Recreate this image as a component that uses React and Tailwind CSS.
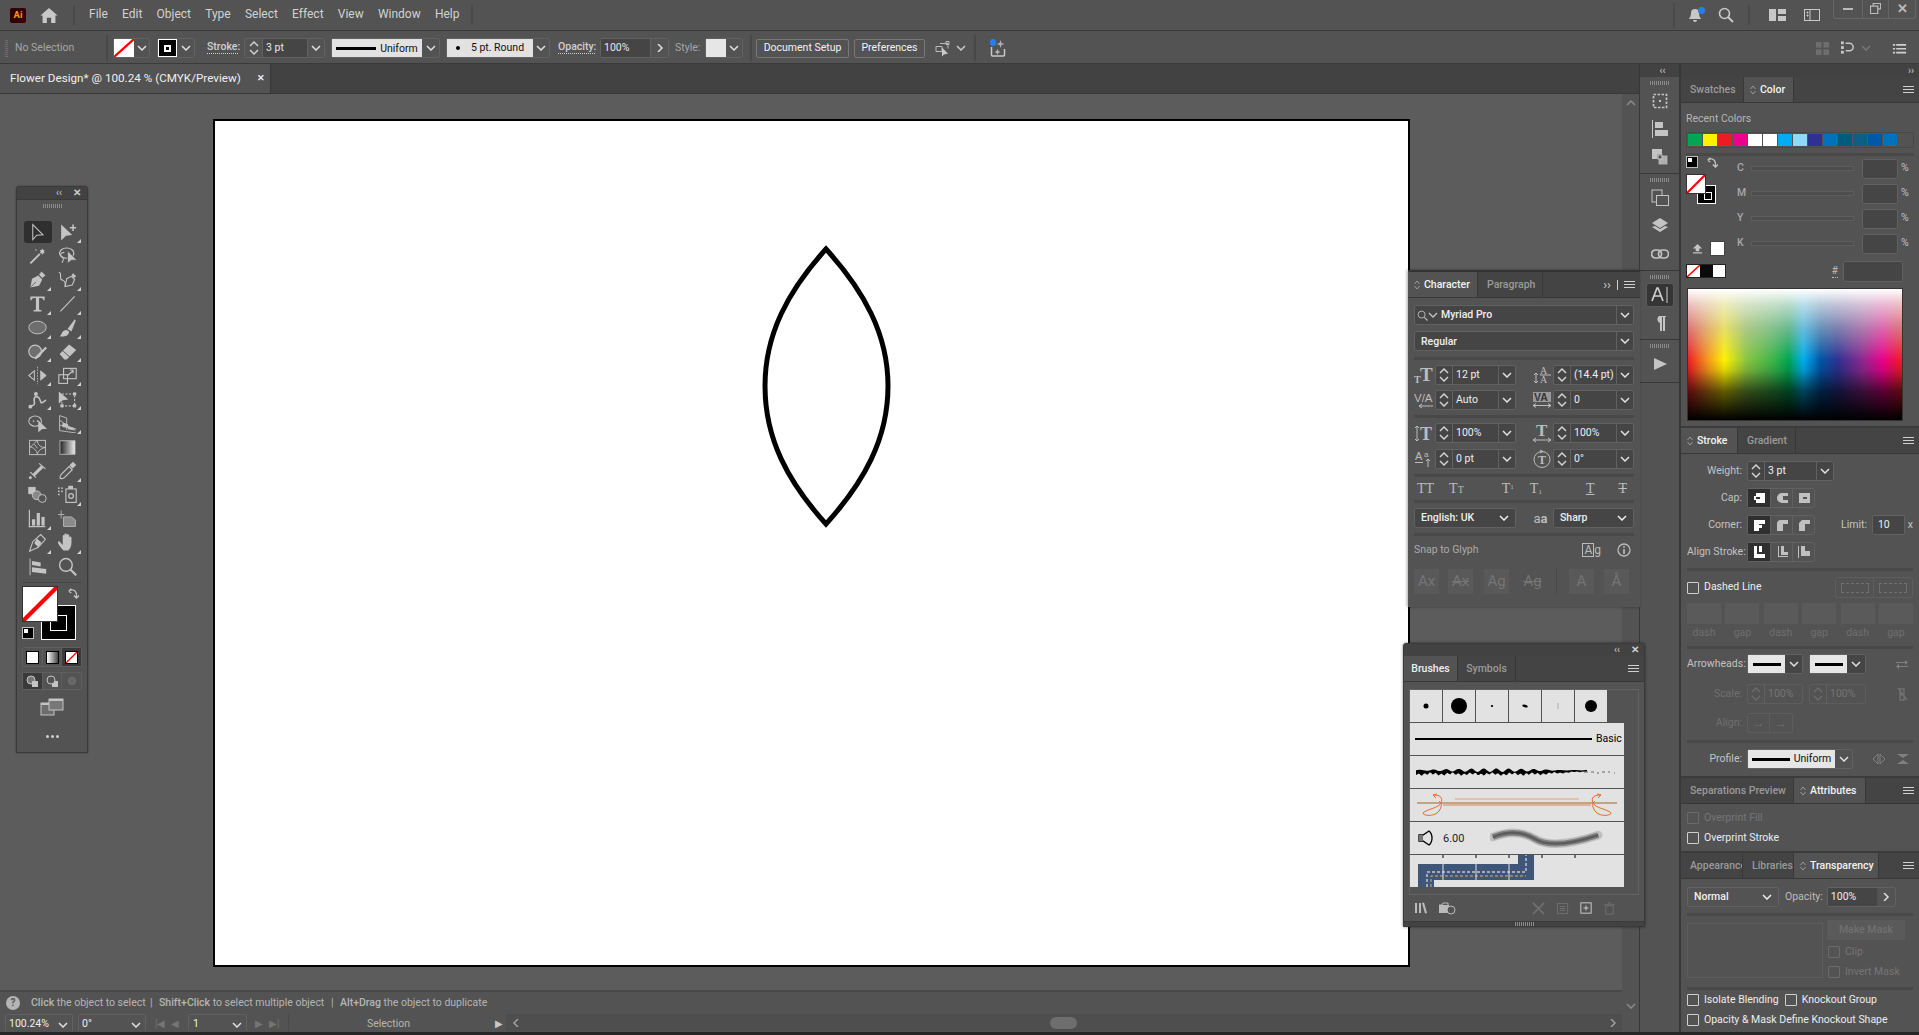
import React from "react";

const ink = "#c4c4c4";
const serif = "Liberation Serif, serif";
const sans = "Liberation Sans, sans-serif";

function Chev({ dir = "down", className = "" }) {
  const pts = {
    down: "1,1 5,5 9,1",
    up: "1,5 5,1 9,5",
    right: "3,0 7,4 3,8",
    left: "7,0 3,4 7,8",
  }[dir];
  const side = dir === "right" || dir === "left";
  return (
    <svg viewBox={side ? "0 0 10 8" : "0 0 10 6"} className={`w-[10px] ${side ? "h-[8px]" : "h-[6px]"} ${className}`}>
      <polyline points={pts} fill="none" stroke="currentColor" strokeWidth="1.5" />
    </svg>
  );
}

function Hamb({ className = "" }) {
  return (
    <div className={`flex w-[11px] flex-col gap-[2px] ${className}`}>
      <div className="h-px bg-[#cfcfcf]" />
      <div className="h-px bg-[#cfcfcf]" />
      <div className="h-px bg-[#cfcfcf]" />
    </div>
  );
}

function UpDown() {
  return (
    <svg viewBox="0 0 6 10" className="mr-[4px] h-[10px] w-[6px] shrink-0 text-[#9a9a9a]">
      <polyline points="0.5,4 3,1 5.5,4" fill="none" stroke="currentColor" />
      <polyline points="0.5,6 3,9 5.5,6" fill="none" stroke="currentColor" />
    </svg>
  );
}

function Stepper({ dim, w = "w-[17px]" }) {
  return (
    <div className={`flex h-full ${w} shrink-0 flex-col items-center justify-center gap-[2px] border-r border-[#616161] ${dim ? "text-[#6a6a6a]" : "text-[#d0d0d0]"}`}>
      <Chev dir="up" className="h-[5px] w-[9px]" />
      <Chev className="h-[5px] w-[9px]" />
    </div>
  );
}

function ChevBox({ w = "w-[17px]", dim }) {
  return (
    <div className={`flex h-full ${w} shrink-0 items-center justify-center border-l border-[#616161] ${dim ? "text-[#777]" : "text-[#e0e0e0]"}`}>
      <Chev className="h-[5px] w-[9px]" />
    </div>
  );
}

function Spin({ value, w, noChev, dim }) {
  return (
    <div className={`flex h-[20px] ${w} shrink-0 items-center rounded-[2px] border ${dim ? "border-[#5d5d5d] text-[#757575]" : "border-[#616161] bg-[#454545] text-[#efefef]"}`}>
      <Stepper dim={dim} />
      <span className="min-w-0 flex-1 whitespace-nowrap pl-[3px] pt-px leading-none">{value}</span>
      {!noChev && <ChevBox dim={dim} />}
    </div>
  );
}

function Tab({ label, active, w }) {
  return (
    <div className={`flex h-full ${w} shrink-0 items-center overflow-hidden border-r border-[#383838] font-medium ${active ? "bg-[#535353] pl-[6px] text-[#f2f2f2]" : "bg-[#444] pl-[9px] text-[#9a9a9a]"}`}>
      {active && <UpDown />}
      <span className="whitespace-nowrap pt-[2px]">{label}</span>
    </div>
  );
}

function TabBar({ children }) {
  return (
    <div className="flex h-[26px] shrink-0 items-stretch border-b border-[#383838] bg-[#444]">
      {children}
      <div className="flex flex-1 items-center justify-end pr-[5px]">
        <Hamb />
      </div>
    </div>
  );
}

function Check({ label, dim, className = "" }) {
  return (
    <div className={`flex h-[14px] items-center gap-[5px] whitespace-nowrap ${className}`}>
      <div className={`h-[12px] w-[12px] rounded-[1px] border ${dim ? "border-[#6a6a6a]" : "border-[#cfcfcf]"}`} />
      <span className={dim ? "text-[#757575]" : "text-[#ececec]"}>{label}</span>
    </div>
  );
}

function NoneSwatch({ className = "" }) {
  return (
    <svg viewBox="0 0 20 20" preserveAspectRatio="none" className={className}>
      <rect width="20" height="20" fill="#fff" />
      <line x1="0" y1="20" x2="20" y2="0" stroke="#ff0000" strokeWidth="2.4" />
    </svg>
  );
}

function Sep({ className = "" }) {
  return <div className={`h-[3px] bg-[#484848] ${className}`} />;
}

function Grip({ className = "" }) {
  return <div className={`h-[4px] w-[19px] bg-[repeating-linear-gradient(to_right,#8a8a8a_0,#8a8a8a_1px,transparent_1px,transparent_2px)] ${className}`} />;
}

// ---- tool icons, drawn on a 24 box

const toolIcons = [
  [
    <path d="M6 2v19l5-5.5 8-.5z" fill="none" stroke={ink} strokeWidth="1.3" />,
    <g fill={ink}>
      <path d="M4 2v20l6-6 8-1z" />
      <path d="M15 5h3V2h2v3h3v2h-3v3h-2V7h-3z" />
    </g>,
  ],
  [
    <g stroke={ink} fill={ink}>
      <line x1="3" y1="22" x2="15" y2="10" strokeWidth="2.4" />
      <path d="M18 3l1 2 2 0-1 2 1 2-2 0-1 2-1-2-2 0 1-2-1-2 2 0z" stroke="none" />
      <circle cx="10" cy="5" r="1" stroke="none" />
    </g>,
    <g>
      <ellipse cx="11" cy="9" rx="9" ry="6.5" fill="none" stroke={ink} strokeWidth="1.5" />
      <path d="M8 8c-5 0-6 4-3 6s2 4 0 7" fill="none" stroke={ink} strokeWidth="1.5" />
      <path d="M12 6v16l5-4 7 0z" fill={ink} stroke="#535353" />
    </g>,
  ],
  [
    <g fill={ink}>
      <path d="M3 22l2-11 8-4 5 5-4 8z" />
      <path d="M14 6l3-4 5 5-4 3z" />
      <line x1="3" y1="22" x2="10" y2="15" stroke="#535353" strokeWidth="1" />
    </g>,
    <g>
      <path d="M9 21l2-10 6-3 4 4-3 7z" fill="none" stroke={ink} strokeWidth="1.4" />
      <path d="M17 7l2-3 4 4-3 2z" fill={ink} />
      <path d="M1 3c4 0 1 7 3 9s6 0 5 9" fill="none" stroke={ink} strokeWidth="1.4" />
    </g>,
  ],
  [
    <path d="M3 3h18v5h-1.500c-.5-2-1-3-3-3H14v14c0 1 .8 1.500 3 1.500V22H7v-1.500c2.200 0 3-.5 3-1.500V5H7.500c-2 0-2.500 1-3 3H3z" fill={ink} />,
    <line x1="3" y1="22" x2="21" y2="3" stroke={ink} strokeWidth="1.4" />,
  ],
  [
    <ellipse cx="12" cy="12" rx="11" ry="8" fill="#6e6e6e" stroke={ink} strokeWidth="1.2" />,
    <g fill={ink}>
      <path d="M12 14L21 2l1.500 1L17 17z" />
      <path d="M2 23c3-1 2-8 9-8l3 2c0 6-7 7-12 6z" />
    </g>,
  ],
  [
    <g>
      <circle cx="9" cy="12" r="8" fill="#6e6e6e" stroke={ink} strokeWidth="1.5" />
      <path d="M8 20L22 6l2 2L10 22z" fill={ink} />
    </g>,
    <g>
      <path d="M2 15L14 3l9 7-12 12H8z" fill={ink} />
      <path d="M6 11l9 8" stroke="#535353" strokeWidth="1.2" />
    </g>,
  ],
  [
    <g stroke={ink} fill="none">
      <line x1="12" y1="1" x2="12" y2="23" strokeDasharray="2 1.5" />
      <path d="M8 6v12l-7-6z" strokeWidth="1.3" />
      <path d="M16 6v12l7-6z" fill={ink} />
    </g>,
    <g fill="none" stroke={ink} strokeWidth="1.4">
      <rect x="1" y="11" width="11" height="11" />
      <rect x="7" y="3" width="16" height="13" />
      <path d="M12 12l7-6M15 5h4v4" />
    </g>,
  ],
  [
    <g fill="none" stroke={ink} strokeWidth="2">
      <path d="M2 21c3-2 5-1 6-3s-2-7 1-9 5 1 6 3 1 5 3 4 4-3 5-3" />
      <circle cx="3" cy="21" r="1.500" />
      <circle cx="10" cy="5" r="1.500" fill={ink} />
    </g>,
    <g>
      <rect x="5" y="5" width="16" height="15" fill="none" stroke={ink} strokeDasharray="2.500 2" strokeWidth="1.4" />
      <path d="M1 2v15l5-4 7-1z" fill={ink} />
      <rect x="19" y="3" width="4" height="4" fill={ink} />
      <rect x="19" y="18" width="4" height="4" fill={ink} />
      <rect x="3" y="18" width="4" height="4" fill={ink} />
    </g>,
  ],
  [
    <g>
      <ellipse cx="9" cy="9" rx="8" ry="6.500" fill="none" stroke={ink} strokeWidth="1.3" />
      <circle cx="7" cy="9" r="1" fill={ink} />
      <circle cx="12" cy="9" r="1" fill={ink} />
      <path d="M13 8v15l5-4 6 0z" fill={ink} />
    </g>,
    <g fill="none" stroke={ink}>
      <path d="M2 2l0 19 21 3M2 2l9 3 0 15M2 8l20 13M2 14l21 5" strokeWidth="1.1" />
      <path d="M6 12l6 1v4l-6-1z" fill={ink} />
      <path d="M13 16l7 2v2l-7-1z" fill={ink} />
    </g>,
  ],
  [
    <g fill="none" stroke={ink} strokeWidth="1.2">
      <rect x="2" y="3" width="20" height="18" />
      <path d="M2 11c4 0 5-5 10-8M12 3c0 6 4 9 10 9M2 11c5 1 9 4 10 10M12 21c0-4 4-8 10-9M8 8l4 5" />
    </g>,
    <g>
      <defs>
        <linearGradient id="toolGrad">
          <stop offset="0" stopColor="#222" />
          <stop offset="1" stopColor="#eee" />
        </linearGradient>
      </defs>
      <rect x="2.500" y="3.500" width="19" height="17" fill="url(#toolGrad)" stroke={ink} />
    </g>,
  ],
  [
    <g fill={ink} stroke={ink}>
      <line x1="7" y1="18" x2="18" y2="7" strokeWidth="4" />
      <line x1="14" y1="3" x2="22" y2="10" strokeWidth="1.500" />
      <line x1="3" y1="14" x2="10" y2="21" strokeWidth="1.500" />
      <circle cx="3" cy="21" r="1.500" />
    </g>,
    <g fill="none" stroke={ink} strokeWidth="1.500">
      <path d="M3 22c-1-2 0-4 2-6l9-9 4 4-9 9c-2 2-4 3-6 2z" />
      <path d="M15 6l4-4 3 3-4 4" fill={ink} />
    </g>,
  ],
  [
    <g stroke={ink} strokeWidth="1.2">
      <rect x="1" y="3" width="8" height="8" fill={ink} />
      <circle cx="11" cy="13" r="5.500" fill="#888" />
      <circle cx="18" cy="17" r="5" fill="#535353" />
    </g>,
    <g fill={ink}>
      <rect x="13" y="1" width="6" height="4" />
      <rect x="10" y="5" width="13" height="17" fill="#535353" stroke={ink} strokeWidth="1.400" />
      <circle cx="16.500" cy="14" r="3" fill="none" stroke={ink} strokeWidth="1.500" />
      <rect x="0" y="3" width="2" height="2" />
      <rect x="4" y="3" width="2" height="2" />
      <rect x="0" y="7" width="2" height="2" />
      <rect x="4" y="7" width="2" height="2" />
      <rect x="0" y="11" width="2" height="2" />
    </g>,
  ],
  [
    <g fill={ink}>
      <rect x="1" y="1" width="1.500" height="22" />
      <rect x="1" y="21.500" width="21" height="1.500" />
      <rect x="5" y="13" width="4" height="8" />
      <rect x="11" y="5" width="4" height="16" />
      <rect x="17" y="10" width="4" height="11" />
    </g>,
    <g>
      <path d="M0 7h8M4 2v10" stroke={ink} />
      <path d="M7 10h10l5 4v8H7z" fill="#8a8a8a" stroke={ink} />
    </g>,
  ],
  [
    <g>
      <path d="M2 23l4-12 10-9 6 6-9 10z" fill="none" stroke={ink} strokeWidth="1.400" />
      <path d="M11 7l6 5-4 6-5-5z" fill={ink} />
    </g>,
    <path d="M7 22c-3-3-7-8-7-10s2-2 3 0l3 3V4c0-2 2-2 2 0v5V2c0-2 3-2 3 0v7-6c0-2 3-2 3 0v7-4c0-2 3-2 3 0 0 5 1 12-4 16z" fill={ink} />,
  ],
  [
    <g fill={ink}>
      <path d="M2 2h1.200v21H2z" />
      <path d="M5 5l11 2v5L5 10zM5 13l18 2v6L5 19z" />
    </g>,
    <g fill="none" stroke={ink}>
      <circle cx="10" cy="10" r="8" strokeWidth="1.800" />
      <line x1="16" y1="16" x2="23" y2="23" strokeWidth="2.600" />
    </g>,
  ],
];

const toolFlags = [
  [false, true],
  [false, false],
  [true, true],
  [true, true],
  [true, true],
  [true, true],
  [true, true],
  [true, true],
  [false, true],
  [false, false],
  [false, true],
  [false, true],
  [true, false],
  [true, true],
  [false, false],
];

function ToolPanel() {
  return (
    <div className="absolute left-[16px] top-[186px] flex h-[567px] w-[72px] flex-col rounded-t-[3px] border border-[#3a3a3a] bg-[#535353] shadow-[0_0_2px_rgba(0,0,0,0.4)]">
      <div className="flex h-[13px] shrink-0 items-center justify-end gap-[11px] border-b border-[#3a3a3a] bg-[#424242] pr-[6px] text-[#cfcfcf]">
        <span className="text-[10px] leading-none">‹‹</span>
        <span className="text-[10px] font-bold leading-none">✕</span>
      </div>
      <div className="mb-[13px] mt-[4px] flex h-[4px] justify-center">
        <Grip />
      </div>
      <div className="flex flex-col">
        {toolIcons.map((row, r) => (
          <div key={r} className="flex h-[23.9px] justify-center gap-[2px] pl-px">
            {row.map((icon, c) => (
              <div key={c} className={`relative flex h-[22px] w-[28px] items-center justify-center rounded-[3px] ${r === 0 && c === 0 ? "bg-[#2f2f2f]" : ""}`}>
                <svg viewBox="0 0 24 24" className="h-[19px] w-[19px]">{icon}</svg>
                {toolFlags[r][c] && (
                  <svg viewBox="0 0 4 4" className="absolute bottom-0 right-[1px] h-[4px] w-[4px]">
                    <path d="M4 0v4H0z" fill="#d0d0d0" />
                  </svg>
                )}
              </div>
            ))}
          </div>
        ))}
      </div>
      <div className="mx-[5px] mt-[3px] h-px bg-[#484848]" />
      <div className="relative mt-[3px] h-[53px]">
        <NoneSwatch className="absolute left-[5px] top-0 z-10 h-[36px] w-[36px] border border-[#333]" />
        <div className="absolute left-[24px] top-[19px] flex h-[35px] w-[35px] items-end justify-end border border-white bg-black p-[8px]">
          <div className="h-[16px] w-[18px] border border-white" />
        </div>
        <svg viewBox="0 0 14 14" className="absolute left-[50px] top-[1px] h-[12px] w-[12px]">
          <path d="M2 5c3-3 8-2 9 3M2 5l3-3M2 5l3 2M11 12V8M8 10l3 3 3-3" fill="none" stroke={ink} strokeWidth="1.5" />
        </svg>
        <div className="absolute left-[5px] top-[41px] h-[12px] w-[12px] border border-[#bbb] bg-black">
          <div className="h-[6px] w-[6px] border border-black bg-white" />
        </div>
      </div>
      <div className="mx-[5px] mt-[8px] flex h-[20px] rounded-[2px] border border-[#5f5f5f]">
        <div className="flex flex-1 items-center justify-center border-r border-[#5f5f5f]">
          <div className="h-[13px] w-[13px] border border-black bg-white" />
        </div>
        <div className="flex flex-1 items-center justify-center border-r border-[#5f5f5f]">
          <div className="h-[13px] w-[13px] border border-black bg-[linear-gradient(to_right,#fff,#444)]" />
        </div>
        <div className="flex flex-1 items-center justify-center bg-[#3a3a3a]">
          <NoneSwatch className="h-[13px] w-[13px] border border-black" />
        </div>
      </div>
      <div className="mx-[5px] mt-[5px] flex h-[18px] rounded-[2px] border border-[#5f5f5f]">
        <div className="flex flex-1 items-center justify-center bg-[#3a3a3a]">
          <svg viewBox="0 0 12 12" className="h-[12px] w-[12px]">
            <circle cx="5" cy="5" r="4" fill="#777" stroke={ink} />
            <rect x="6" y="6" width="6" height="6" fill={ink} />
          </svg>
        </div>
        <div className="flex flex-1 items-center justify-center border-x border-[#5f5f5f]">
          <svg viewBox="0 0 12 12" className="h-[12px] w-[12px]">
            <rect x="6" y="6" width="6" height="6" fill={ink} />
            <circle cx="5" cy="5" r="4" fill="#535353" stroke={ink} />
          </svg>
        </div>
        <div className="flex flex-1 items-center justify-center">
          <svg viewBox="0 0 12 12" className="h-[10px] w-[10px]">
            <circle cx="6" cy="6" r="4.5" fill="#666" stroke="#707070" />
          </svg>
        </div>
      </div>
      <div className="mt-[8px] flex justify-center">
        <svg viewBox="0 0 24 18" className="h-[18px] w-[24px]">
          <rect x="1" y="5" width="13" height="12" fill="#6d6d6d" stroke={ink} />
          <rect x="9" y="1" width="14" height="11" fill="#777" stroke={ink} />
          <rect x="9" y="1" width="14" height="2" fill={ink} />
          <rect x="1" y="5" width="8" height="2" fill={ink} />
        </svg>
      </div>
      <div className="mt-[19px] flex justify-center gap-[2px]">
        <div className="h-[3px] w-[3px] rounded-full bg-[#cfcfcf]" />
        <div className="h-[3px] w-[3px] rounded-full bg-[#cfcfcf]" />
        <div className="h-[3px] w-[3px] rounded-full bg-[#cfcfcf]" />
      </div>
    </div>
  );
}

const glyphFill = "#bcbcbc";
const charIcons = {
  size: (
    <>
      <text x="0" y="18" fontFamily={serif} fontWeight="700" fontSize="10" fill={glyphFill}>T</text>
      <text x="6" y="16" fontFamily={serif} fontWeight="700" fontSize="19" fill={glyphFill}>T</text>
    </>
  ),
  leading: (
    <>
      <text x="8" y="8.500" fontFamily={serif} fontSize="10" fill={glyphFill}>A</text>
      <text x="8" y="18" fontFamily={serif} fontSize="10" fill={glyphFill}>A</text>
      <rect x="8" y="9.500" width="11" height="1" fill={glyphFill} />
      <path d="M4 8v10M2 10l2-2 2 2M2 16l2 2 2-2" fill="none" stroke={glyphFill} />
    </>
  ),
  kern: (
    <>
      <text x="0" y="12" fontFamily={sans} fontSize="11.500" fill={glyphFill}>V/A</text>
      <path d="M5 16h14M8 14l-3 2 3 2" fill="none" stroke={glyphFill} />
    </>
  ),
  track: (
    <>
      <rect x="1" y="2" width="18" height="10" fill="#999" />
      <text x="2" y="11" fontFamily={sans} fontWeight="700" fontSize="10.500" fill="#353535">VA</text>
      <path d="M1 15.500h18M4 13.500l-3 2 3 2M16 13.500l3 2-3 2" fill="none" stroke={glyphFill} />
    </>
  ),
  vscale: (
    <>
      <path d="M3 3v15M1 5l2-2 2 2M1 16l2 2 2-2" fill="none" stroke={glyphFill} />
      <text x="6" y="17" fontFamily={serif} fontWeight="700" fontSize="18" fill={glyphFill}>T</text>
    </>
  ),
  hscale: (
    <>
      <text x="4" y="13" fontFamily={serif} fontWeight="700" fontSize="17" fill={glyphFill}>T</text>
      <path d="M1 17h18M4 15l-3 2 3 2M16 15l3 2-3 2" fill="none" stroke={glyphFill} />
    </>
  ),
  baseline: (
    <>
      <text x="1" y="11" fontFamily={sans} fontSize="11" fill={glyphFill}>A</text>
      <text x="10" y="7.500" fontFamily={sans} fontSize="8" fill={glyphFill}>a</text>
      <rect x="1" y="13" width="8" height="1" fill={glyphFill} />
      <path d="M14 18V10M12 12l2-2 2 2" fill="none" stroke={glyphFill} />
    </>
  ),
  rotate: (
    <>
      <circle cx="10" cy="10.500" r="8" fill="none" stroke={glyphFill} />
      <path d="M8 1l3 1.500L8 4" fill="none" stroke={glyphFill} />
      <text x="6" y="15" fontFamily={serif} fontWeight="700" fontSize="12" fill={glyphFill}>T</text>
    </>
  ),
};

function CharRow({ icon, value }) {
  return (
    <div className="flex w-[102px] items-center">
      <svg viewBox="0 0 20 20" className="mr-[1px] h-[20px] w-[20px] shrink-0">{charIcons[icon]}</svg>
      <Spin value={value} w="w-[81px]" />
    </div>
  );
}

function CharacterPanel() {
  return (
    <div className="absolute left-[1408px] top-[270px] flex h-[337px] w-[232px] flex-col border-t-2 border-[#333] bg-[#535353] shadow-[-1px_0_3px_rgba(0,0,0,0.35)]">
      <div className="flex h-[26px] shrink-0 items-stretch border-b border-[#383838] bg-[#444]">
        <Tab label="Character" active w="w-[70px]" />
        <Tab label="Paragraph" w="w-[65px]" />
        <div className="flex flex-1 items-center justify-end gap-[6px] pr-[5px] text-[#cfcfcf]">
          <span className="text-[13px] leading-none">››</span>
          <div className="h-[10px] w-px bg-[#cfcfcf]" />
          <Hamb />
        </div>
      </div>
      <div className="flex flex-col px-[6px] pt-[7px]">
        <div className="flex h-[20px] items-center rounded-[2px] border border-[#616161] bg-[#454545]">
          <div className="flex w-[26px] items-center pl-[2px] text-[#bbb]">
            <svg viewBox="0 0 12 12" className="h-[11px] w-[11px]">
              <circle cx="5" cy="5" r="3.800" fill="none" stroke="currentColor" />
              <line x1="8" y1="8" x2="11.500" y2="11.500" stroke="currentColor" strokeWidth="1.300" />
            </svg>
            <Chev className="h-[4px] w-[7px]" />
          </div>
          <span className="flex-1 pt-px font-medium text-[#efefef]">Myriad Pro</span>
          <ChevBox />
        </div>
        <div className="mt-[6px] flex h-[20px] items-center rounded-[2px] border border-[#616161] bg-[#454545]">
          <span className="flex-1 pl-[6px] pt-[2px] font-medium text-[#efefef]">Regular</span>
          <ChevBox />
        </div>
        <Sep className="mt-[6px]" />
        <div className="mt-[5px] flex justify-between">
          <CharRow icon="size" value="12 pt" />
          <CharRow icon="leading" value="(14.4 pt)" />
        </div>
        <div className="mt-[5px] flex justify-between">
          <CharRow icon="kern" value="Auto" />
          <CharRow icon="track" value="0" />
        </div>
        <Sep className="mt-[5px]" />
        <div className="mt-[5px] flex justify-between">
          <CharRow icon="vscale" value="100%" />
          <CharRow icon="hscale" value="100%" />
        </div>
        <div className="mt-[6px] flex justify-between">
          <CharRow icon="baseline" value="0 pt" />
          <CharRow icon="rotate" value="0°" />
        </div>
        <Sep className="mt-[5px]" />
        <div className="flex h-[23px] items-center pl-[3px] font-['Liberation_Serif',serif] text-[14px] leading-none text-[#bcbcbc]">
          <span>TT</span>
          <span className="ml-[15px]">T<span className="text-[10px]">T</span></span>
          <span className="ml-[38px]">T<sup className="text-[7px]">1</sup></span>
          <span className="ml-[16px]">T<sub className="text-[7px]">1</sub></span>
          <span className="ml-[44px] underline">T</span>
          <span className="ml-[24px] line-through">T</span>
        </div>
        <Sep />
        <div className="mt-[5px] flex justify-between">
          <div className="flex h-[20px] w-[102px] items-center justify-between rounded-[2px] border border-[#616161] bg-[#454545] px-[6px] font-medium text-[#efefef]">
            <span className="pt-px">English: UK</span>
            <Chev className="h-[5px] w-[9px]" />
          </div>
          <div className="flex items-center">
            <span className="w-[25px] text-center text-[13px] text-[#bbb]">a<span className="font-bold">a</span></span>
            <div className="flex h-[20px] w-[81px] items-center justify-between rounded-[2px] border border-[#616161] bg-[#454545] px-[6px] font-medium text-[#efefef]">
              <span className="pt-px">Sharp</span>
              <Chev className="h-[5px] w-[9px]" />
            </div>
          </div>
        </div>
        <Sep className="mt-[5px]" />
        <div className="mt-[4px] flex h-[20px] items-center">
          <span className="flex-1 text-[#a9a9a9]">Snap to Glyph</span>
          <span className="mr-[16px] flex items-center text-[12px] leading-none text-[#bbb]"><span className="border border-[#bbb] px-[1px]">A</span>g</span>
          <svg viewBox="0 0 14 14" className="mr-[3px] h-[14px] w-[14px] text-[#bbb]">
            <circle cx="7" cy="7" r="6" fill="none" stroke="currentColor" strokeWidth="1.300" />
            <rect x="6.200" y="6" width="1.600" height="5" fill="currentColor" />
            <rect x="6.200" y="3" width="1.600" height="1.800" fill="currentColor" />
          </svg>
        </div>
        <div className="mt-[9px] flex h-[25px] items-center text-[15px] text-[#757575]">
          <div className="flex h-full w-[25px] items-center justify-center bg-[#595959]">Ax</div>
          <div className="ml-[9px] flex h-full w-[25px] items-center justify-center bg-[#595959] line-through">Ax</div>
          <div className="ml-[11px] flex h-full w-[25px] items-center justify-center bg-[#595959]">Ag</div>
          <div className="ml-[11px] flex h-full w-[25px] items-center justify-center line-through">Ag</div>
          <div className="ml-[11px] h-full w-px bg-[#484848]" />
          <div className="ml-[12px] flex h-full w-[25px] items-center justify-center bg-[#595959]">A</div>
          <div className="ml-[10px] flex h-full w-[25px] items-center justify-center bg-[#595959]">Å</div>
        </div>
      </div>
    </div>
  );
}

// jagged chalk line for the brush preview
function roughLine() {
  let top = "M0 6";
  let bottom = "";
  for (let x = 0; x <= 172; x += 1.5) {
    const fade = x > 120 ? 1 - (x - 120) / 60 : 1;
    const a = (Math.sin(x * 3.7) + Math.sin(x * 0.53) * 0.6) * 1.1;
    const b = (Math.cos(x * 5.3) + Math.sin(x * 0.31) * 0.6) * 1.1;
    top += `L${x} ${(4.2 + a * fade).toFixed(1)}`;
    bottom = `L${x} ${(8 + b * fade - (1 - fade) * 3).toFixed(1)}` + bottom;
  }
  return top + bottom + "Z";
}

function BrushesPanel() {
  const dots = [
    <circle cx="16" cy="16" r="2.500" />,
    <circle cx="16" cy="16" r="8" />,
    <ellipse cx="16" cy="16" rx="1.200" ry="1" />,
    <ellipse cx="16" cy="16" rx="2.800" ry="1.400" transform="rotate(15 16 16)" />,
    <line x1="16" y1="13" x2="16" y2="19" stroke="#999" strokeWidth="0.700" />,
    <circle cx="16" cy="16" r="6" />,
  ];
  return (
    <div className="absolute left-[1403px] top-[643px] flex h-[284px] w-[242px] flex-col rounded-t-[3px] border border-[#3a3a3a] bg-[#535353] shadow-[0_0_3px_rgba(0,0,0,0.5)]">
      <div className="flex h-[12px] shrink-0 items-center justify-end gap-[11px] bg-[#424242] pr-[5px] text-[#cfcfcf]">
        <span className="text-[10px] leading-none">‹‹</span>
        <span className="text-[10px] font-bold leading-none">✕</span>
      </div>
      <TabBar>
        <div className="flex w-[54px] items-center justify-center border-r border-[#383838] bg-[#535353] pt-[2px] font-medium text-[#efefef]">Brushes</div>
        <div className="flex w-[58px] items-center justify-center border-r border-[#383838] pt-[2px] font-medium text-[#9a9a9a]">Symbols</div>
      </TabBar>
      <div className="mx-[5px] mt-[7px] h-[209px] border border-[#616161]">
        <div className="flex w-[214px] flex-col gap-px">
          <div className="flex h-[32px] gap-px">
            {dots.map((d, i) => (
              <svg key={i} viewBox="0 0 32 32" className="h-[32px] w-[32px] bg-[#e2e2e2]">{d}</svg>
            ))}
          </div>
          <div className="flex h-[32px] items-center bg-[#e2e2e2] pl-[5px] text-[#000]">
            <div className="h-[2px] w-[177px] bg-black" />
            <span className="ml-[4px]">Basic</span>
          </div>
          <div className="flex h-[32px] items-center justify-center bg-[#e2e2e2]">
            <svg viewBox="0 0 202 12" className="h-[12px] w-[202px]">
              <path d={roughLine()} fill="#000" />
              <path d="M168 6h4m3 0h3m3 1h2m3-1h3m3 0h2m4 1h1" stroke="#666" fill="none" />
            </svg>
          </div>
          <div className="flex h-[32px] items-center justify-center bg-[#e2e2e2]">
            <svg viewBox="0 0 204 24" className="h-[24px] w-[204px]">
              <line x1="2" y1="10" x2="202" y2="10" stroke="#a0662a" />
              <line x1="28" y1="12" x2="176" y2="12" stroke="#e8813a" />
              <line x1="40" y1="6" x2="164" y2="6" stroke="#e8a076" />
              <path d="M18 2c8 0 10 3 8 8s-14 6-18 10c0 3 12 4 16-2s2-8 0-10M18 2l4-1M18 2l3 3" fill="none" stroke="#e8682a" />
              <path d="M186 2c-8 0-10 3-8 8s14 6 18 10c0 3-12 4-16-2s-2-8 0-10M186 2l-4-1M186 2l-3 3" fill="none" stroke="#e8682a" />
            </svg>
          </div>
          <div className="flex h-[32px] items-center bg-[#e2e2e2] pl-[8px] text-[#222]">
            <svg viewBox="0 0 18 18" className="h-[18px] w-[18px]">
              <path d="M1 6h4l6-4c4 3 4 11 0 14l-6-4H1z" fill="none" stroke="#000" strokeWidth="1.300" />
              <rect x="1" y="6" width="4" height="6" fill="#777" />
            </svg>
            <span className="ml-[7px] text-[11px]">6.00</span>
            <svg viewBox="0 0 118 22" className="ml-[26px] h-[22px] w-[113px]">
              <path d="M3 10c20-8 34-4 44 2s30 8 66-4" fill="none" stroke="#b0b0b0" strokeWidth="9" strokeLinecap="round" opacity="0.7" />
              <path d="M3 10c20-8 34-4 44 2s30 8 66-4" fill="none" stroke="#808080" strokeWidth="6" />
              <path d="M3 10c20-8 34-4 44 2s30 8 66-4" fill="none" stroke="#5c5c5c" strokeWidth="2.500" />
            </svg>
          </div>
          <div className="relative h-[32px] overflow-hidden bg-[#e2e2e2]">
            <svg viewBox="0 0 214 32" className="h-[32px] w-[214px]">
              <g stroke="#000" strokeWidth="1">
                <line x1="33" y1="0" x2="33" y2="3" /><line x1="66" y1="0" x2="66" y2="3" /><line x1="99" y1="0" x2="99" y2="3" />
                <line x1="132" y1="0" x2="132" y2="3" /><line x1="165" y1="0" x2="165" y2="3" />
              </g>
              <path d="M8 32V9h100V0h16v25H24v7z" fill="#3f5678" />
              <path d="M17 32V17h99V0" fill="none" stroke="#fff" strokeWidth="1" strokeDasharray="3 2" />
              <path d="M21 32V21h95" fill="none" stroke="#e5b24e" strokeWidth="1" strokeDasharray="3 2" />
              <line x1="33" y1="9" x2="33" y2="25" stroke="#e2e2e2" />
              <line x1="66" y1="9" x2="66" y2="25" stroke="#e2e2e2" />
              <line x1="99" y1="9" x2="99" y2="25" stroke="#e2e2e2" />
            </svg>
          </div>
        </div>
      </div>
      <div className="flex h-[26px] items-center pl-[10px] pr-[28px] text-[#bbb]">
        <svg viewBox="0 0 16 12" className="h-[12px] w-[16px]"><path d="M1 1h2v10H1zM5 1h2v10H5zM8 1l2-.5 3 10.500-2 .5z" fill="currentColor" /></svg>
        <svg viewBox="0 0 18 14" className="ml-[8px] h-[14px] w-[18px]">
          <path d="M1 4h3l1-2h5v4" fill="none" stroke="currentColor" />
          <rect x="1" y="4" width="10" height="8" fill="currentColor" />
          <circle cx="13" cy="9" r="4" fill="#535353" stroke="currentColor" />
        </svg>
        <div className="flex-1" />
        <div className="flex items-center gap-[11px]">
          <svg viewBox="0 0 14 14" className="h-[13px] w-[13px] text-[#707070]"><path d="M1 1l12 12M13 1L1 13" stroke="currentColor" strokeWidth="1.800" /></svg>
          <svg viewBox="0 0 14 14" className="h-[13px] w-[13px] text-[#707070]"><rect x="1.500" y="1.500" width="11" height="11" fill="none" stroke="currentColor" /><path d="M4 5h6M4 7h6M4 9h6" stroke="currentColor" /></svg>
          <svg viewBox="0 0 14 14" className="h-[12px] w-[12px] text-[#ddd]"><rect x="1" y="1" width="12" height="12" fill="none" stroke="currentColor" /><path d="M7 4v6M4 7h6" stroke="currentColor" /></svg>
          <svg viewBox="0 0 14 14" className="h-[13px] w-[13px] text-[#707070]"><path d="M3 4h8v9H3zM1 3h12M5 1h4" fill="none" stroke="currentColor" /></svg>
        </div>
      </div>
      <div className="flex h-[5px] justify-center border-t border-[#3a3a3a] bg-[#424242]">
        <Grip className="h-[3px]" />
      </div>
    </div>
  );
}

function ToggleGroup({ icons, active = 0 }) {
  return (
    <div className="flex h-[20px] rounded-[2px] border border-[#616161]">
      {icons.map((d, i) => (
        <div key={i} className={`flex h-full w-[22px] items-center justify-center ${i > 0 ? "border-l border-[#616161]" : ""} ${i === active ? "bg-[#2f2f2f]" : ""}`}>
          <svg viewBox="0 0 12 12" className="h-[12px] w-[12px]">
            <g fill={i === active ? "#fff" : "#c0c0c0"}>{d}</g>
          </svg>
        </div>
      ))}
    </div>
  );
}

const capIcons = [
  <path d="M3 1h9v10H3V8H1V4h2zM3 5v2h4V5z" fillRule="evenodd" />,
  <path d="M6 1h6v3H7v4h5v3H6a5 5 0 010-10z" />,
  <path d="M1 1h11v10H1zM5 5v2h4V5z" fillRule="evenodd" />,
];
const cornerIcons = [
  <path d="M1 1h11v4H6v7H1zM6 6v3h3V6z" fillRule="evenodd" />,
  <path d="M5 1h7v4H7v7H1V5a4 4 0 014-4z" />,
  <path d="M4 1h8v4H7v7H1V4z" />,
];
const alignIcons = [
  <path d="M1 0h3v8h8v4H1zM6 0h3v6H6z" />,
  <path d="M2 0h1v10h9v1H2zM5 0h3v6h4v3H5z" />,
  <path d="M0 0h1v12H0zM3 0h4v5h5v5H3z" />,
];

function StrokeLine({ w }) {
  return <div className={`h-[3px] ${w} bg-black`} />;
}

function PanelLabel({ children, dim }) {
  return <span className={`w-[55px] shrink-0 whitespace-nowrap pt-px text-right ${dim ? "text-[#6f6f6f]" : "text-[#c2c2c2]"}`}>{children}</span>;
}

function ColorPanel() {
  const swatches = ["#00a651", "#fff200", "#ed1c24", "#ec008c", "#fff", "#fff", "#00aeef", "#8ed8f8", "#2e3192", "#0072bc", "#005b7f", "#0f5f85", "#0058a8", "#0072bc"];
  const cmyk = ["C", "M", "Y", "K"];
  return (
    <div className="flex h-[351px] shrink-0 flex-col border-b-2 border-[#3b3b3b]">
      <TabBar>
        <Tab label="Swatches" w="w-[63px]" />
        <Tab label="Color" active w="w-[50px]" />
      </TabBar>
      <div className="flex flex-col px-[5px] pt-[11px]">
        <span className="text-[#b5b5b5]">Recent Colors</span>
        <div className="mt-[7px] flex h-[16px] w-[228px] gap-px border border-[#484848] p-px">
          {swatches.map((c, i) => (
            <div key={i} className="h-full w-[14px]" style={{ background: c }} />
          ))}
        </div>
        <Sep className="mt-[5px] h-[2px]" />
        <div className="flex h-[108px]">
          <div className="relative h-[108px] w-[46px] shrink-0">
            <div className="absolute left-0 top-0 h-[12px] w-[12px] border border-[#bbb] bg-black">
              <div className="h-[6px] w-[6px] border border-black bg-white" />
            </div>
            <svg viewBox="0 0 14 14" className="absolute left-[20px] top-0 h-[12px] w-[12px]">
              <path d="M2 5c3-3 8-2 9 3M2 5l3-3M2 5l3 2M11 12V8M8 10l3 3 3-3" fill="none" stroke={ink} strokeWidth="1.500" />
            </svg>
            <NoneSwatch className="absolute left-0 top-[18px] z-10 h-[20px] w-[20px] border border-[#333]" />
            <div className="absolute left-[11px] top-[29px] flex h-[19px] w-[19px] items-end justify-end border border-white bg-black p-[3px]">
              <div className="h-[8px] w-[8px] border border-white" />
            </div>
            <svg viewBox="0 0 12 12" className="absolute left-[6px] top-[87px] h-[11px] w-[11px]">
              <path d="M6 1L1 6h3v3h4V6h3zM1 10h10v1.500H1z" fill={ink} />
            </svg>
            <div className="absolute left-[24px] top-[85px] h-[15px] w-[15px] border border-[#444] bg-white" />
          </div>
          <div className="flex flex-1 flex-col gap-[5px] pt-[3px]">
            {cmyk.map((l) => (
              <div key={l} className="flex h-[20px] items-center">
                <span className="w-[14px] shrink-0 pl-[5px] font-medium text-[#a8a8a8]">{l}</span>
                <div className="ml-[5px] mr-[8px] h-[5px] flex-1 border border-[#5d5d5d] bg-[#4d4d4d]" />
                <div className="h-[20px] w-[36px] shrink-0 rounded-[2px] border border-[#616161] bg-[#454545]" />
                <span className="ml-[3px] w-[13px] text-[#c0c0c0]">%</span>
              </div>
            ))}
          </div>
        </div>
        <div className="-mt-[3px] flex h-[21px] items-center">
          <div className="flex h-[14px] w-[40px] border border-[#222]">
            <NoneSwatch className="h-full w-[13px]" />
            <div className="h-full w-[13px] bg-[#0a0a0a]" />
            <div className="h-full flex-1 bg-white" />
          </div>
          <div className="flex-1" />
          <span className="mr-[5px] border-b border-dotted border-[#bbb] leading-[12px] text-[#bbb]">#</span>
          <div className="mr-[11px] h-[21px] w-[60px] rounded-[2px] border border-[#616161] bg-[#454545]" />
        </div>
        <div className="ml-[1px] mt-[6px] h-[133px] w-[216px] border border-[#333] bg-[linear-gradient(to_bottom,#ffffff_0%,rgba(235,235,235,0.78)_12%,rgba(205,205,205,0.5)_30%,rgba(200,200,200,0.18)_46%,rgba(0,0,0,0)_54%,rgba(0,0,0,0.12)_62%,rgba(0,0,0,0.62)_78%,#000_100%),linear-gradient(to_right,#ed1c24_0%,#f7941d_9%,#fff200_17%,#8dc63f_27%,#39b54a_40%,#00a651_47%,#00aeef_54%,#0054a6_62%,#2e3192_70%,#92278f_82%,#ec008c_91%,#ed1c24_100%)]" />
      </div>
    </div>
  );
}

function StrokePanel() {
  const dashCols = ["dash", "gap", "dash", "gap", "dash", "gap"];
  return (
    <div className="flex h-[350px] shrink-0 flex-col border-b-2 border-[#3b3b3b]">
      <TabBar>
        <Tab label="Stroke" active w="w-[57px]" />
        <Tab label="Gradient" w="w-[58px]" />
      </TabBar>
      <div className="flex flex-col px-[6px]">
        <div className="mt-[7px] flex h-[20px] items-center gap-[5px]">
          <PanelLabel>Weight:</PanelLabel>
          <Spin value="3 pt" w="w-[87px]" />
        </div>
        <div className="mt-[7px] flex h-[20px] items-center gap-[5px]">
          <PanelLabel>Cap:</PanelLabel>
          <ToggleGroup icons={capIcons} />
        </div>
        <div className="mt-[7px] flex h-[20px] items-center gap-[5px]">
          <PanelLabel>Corner:</PanelLabel>
          <ToggleGroup icons={cornerIcons} />
          <span className="ml-[21px] pt-px text-[#c2c2c2]">Limit:</span>
          <div className="flex h-[20px] w-[39px] items-center rounded-[2px] border border-[#616161] bg-[#454545] pl-[5px] pt-px text-[#efefef]">10</div>
          <span className="-ml-[2px] pt-px text-[#c2c2c2]">x</span>
        </div>
        <div className="mt-[7px] flex h-[20px] items-center gap-[5px]">
          <PanelLabel>Align Stroke:</PanelLabel>
          <ToggleGroup icons={alignIcons} />
        </div>
        <Sep className="mt-[6px] h-[2px]" />
        <div className="mt-[6px] flex h-[21px] items-center justify-between">
          <Check label="Dashed Line" />
          <div className="flex h-[21px] rounded-[2px] border border-[#5d5d5d]">
            <div className="flex w-[38px] items-center justify-center border-r border-[#5d5d5d]">
              <div className="h-[10px] w-[28px] border border-dashed border-[#707070]" />
            </div>
            <div className="flex w-[38px] items-center justify-center">
              <div className="h-[10px] w-[28px] border border-dashed border-[#707070]" />
            </div>
          </div>
        </div>
        <div className="mt-[5px] flex justify-between">
          {dashCols.map((l, i) => (
            <div key={i} className="flex w-[34px] flex-col items-center">
              <div className="h-[21px] w-full bg-[#5a5a5a]" />
              <span className="mt-[2px] leading-[14px] text-[#6f6f6f]">{l}</span>
            </div>
          ))}
        </div>
        <Sep className="mt-[6px] h-[2px]" />
        <div className="mt-[5px] flex h-[20px] items-center gap-[5px]">
          <PanelLabel>Arrowheads:</PanelLabel>
          <div className="flex h-[20px] w-[56px] items-center rounded-[2px] border border-[#616161]">
            <div className="flex h-full w-[37px] items-center justify-center bg-[#e6e6e6]"><StrokeLine w="w-[28px]" /></div>
            <div className="flex h-full flex-1 items-center justify-center bg-[#454545] text-[#e0e0e0]"><Chev className="h-[5px] w-[9px]" /></div>
          </div>
          <div className="ml-px flex h-[20px] w-[57px] items-center rounded-[2px] border border-[#616161]">
            <div className="flex h-full w-[37px] items-center justify-center bg-[#e6e6e6]"><StrokeLine w="w-[28px]" /></div>
            <div className="flex h-full flex-1 items-center justify-center bg-[#454545] text-[#e0e0e0]"><Chev className="h-[5px] w-[9px]" /></div>
          </div>
          <svg viewBox="0 0 14 12" className="ml-[24px] h-[12px] w-[14px]">
            <path d="M1 4h9V2l3 2.500L10 7V5H1zM13 8H4V6L1 8.500 4 11V9h9z" fill="#808080" />
          </svg>
        </div>
        <div className="mt-[10px] flex h-[20px] items-center gap-[5px]">
          <PanelLabel dim>Scale:</PanelLabel>
          <Spin value="100%" w="w-[56px]" noChev dim />
          <div className="ml-px">
            <Spin value="100%" w="w-[57px]" noChev dim />
          </div>
          <svg viewBox="0 0 14 16" className="ml-[24px] h-[16px] w-[14px]">
            <path d="M3 2l9 12M5 3h4v5H5zM5 9h4v5H5z" fill="none" stroke="#707070" strokeWidth="1.400" />
          </svg>
        </div>
        <div className="mt-[9px] flex h-[20px] items-center gap-[5px]">
          <PanelLabel dim>Align:</PanelLabel>
          <div className="flex h-[20px] rounded-[2px] border border-[#5d5d5d] text-[12px] text-[#707070]">
            <span className="flex w-[22px] items-center justify-center border-r border-[#5d5d5d]">→</span>
            <span className="flex w-[22px] items-center justify-center">→</span>
          </div>
        </div>
        <Sep className="mt-[7px] h-[2px]" />
        <div className="mt-[6px] flex h-[20px] items-center gap-[5px]">
          <PanelLabel>Profile:</PanelLabel>
          <div className="flex h-[20px] w-[106px] items-center rounded-[2px] border border-[#616161]">
            <div className="flex h-full w-[87px] items-center justify-center gap-[4px] bg-[#e6e6e6] text-[#111]">
              <StrokeLine w="w-[38px]" />
              <span className="pt-px">Uniform</span>
            </div>
            <div className="flex h-full flex-1 items-center justify-center text-[#e0e0e0]"><Chev className="h-[5px] w-[9px]" /></div>
          </div>
          <svg viewBox="0 0 14 12" className="ml-[14px] h-[12px] w-[14px]">
            <path d="M6 1v10L1 6zM8 1v10l5-5z" fill="none" stroke="#808080" />
          </svg>
          <svg viewBox="0 0 14 12" className="ml-[5px] h-[12px] w-[14px]">
            <path d="M1 1h12L7 5zM1 11h12L7 7z" fill="#808080" />
          </svg>
        </div>
      </div>
    </div>
  );
}

function AttributesPanel() {
  return (
    <div className="flex h-[75px] shrink-0 flex-col border-b-2 border-[#3b3b3b]">
      <TabBar>
        <Tab label="Separations Preview" w="w-[113px]" />
        <Tab label="Attributes" active w="w-[72px]" />
      </TabBar>
      <div className="flex flex-col gap-[6px] pl-[6px] pt-[7px]">
        <Check label="Overprint Fill" dim />
        <Check label="Overprint Stroke" />
      </div>
    </div>
  );
}

function TransparencyPanel() {
  return (
    <div className="flex min-h-0 flex-1 flex-col">
      <TabBar>
        <Tab label="Appearance" w="w-[62px]" />
        <Tab label="Libraries" w="w-[51px]" />
        <Tab label="Transparency" active w="w-[85px]" />
      </TabBar>
      <div className="flex flex-col px-[6px]">
        <div className="mt-[8px] flex h-[20px] items-center">
          <div className="flex h-[20px] w-[92px] items-center justify-between rounded-[2px] border border-[#616161] px-[6px] font-medium text-[#efefef]">
            <span className="pt-px">Normal</span>
            <Chev className="h-[5px] w-[9px]" />
          </div>
          <span className="ml-[6px] pt-px text-[#bcbcbc]">Opacity:</span>
          <div className="ml-[4px] flex h-[20px] w-[69px] items-center rounded-[2px] border border-[#616161]">
            <div className="flex h-full flex-1 items-center bg-[#454545] pl-[3px] pt-px text-[#efefef]">100%</div>
            <div className="flex h-full w-[18px] items-center justify-center text-[#e0e0e0]"><Chev dir="right" /></div>
          </div>
        </div>
        <Sep className="mt-[6px] h-[2px]" />
        <div className="mt-[7px] flex">
          <div className="h-[55px] w-[136px] border border-[#5d5d5d]" />
          <div className="ml-[4px] flex flex-col">
            <div className="-mt-[3px] flex h-[20px] w-[78px] items-center justify-center bg-[#5a5a5a] font-medium text-[#707070]">Make Mask</div>
            <Check label="Clip" dim className="ml-px mt-[5px]" />
            <Check label="Invert Mask" dim className="ml-px mt-[6px]" />
          </div>
        </div>
        <Sep className="mt-[8px] h-[2px]" />
        <div className="mt-[3px] flex gap-[6px]">
          <Check label="Isolate Blending" />
          <Check label="Knockout Group" />
        </div>
        <Check label="Opacity & Mask Define Knockout Shape" className="mt-[6px]" />
      </div>
    </div>
  );
}

function DockIcon({ children, active }) {
  return (
    <div className={`mx-auto flex h-[24px] w-[28px] items-center justify-center rounded-[3px] ${active ? "border border-[#5a5a5a] bg-[#353535]" : ""}`}>
      <svg viewBox="0 0 18 18" className="h-[18px] w-[18px]">{children}</svg>
    </div>
  );
}

function DockGroup({ h, children }) {
  return (
    <div className={`flex ${h} flex-col border-b border-[#383838] pt-[4px]`}>
      <div className="mb-[4px] flex justify-center">
        <Grip />
      </div>
      <div className="flex flex-col gap-[4px]">{children}</div>
    </div>
  );
}

function Dock() {
  return (
    <div className="flex w-[41px] shrink-0 flex-col border-x border-[#383838] bg-[#535353]">
      <div className="flex h-[13px] shrink-0 items-center justify-center bg-[#424242] pl-[6px] text-[10px] leading-none text-[#cfcfcf]">‹‹</div>
      <DockGroup h="h-[97px]">
        <DockIcon>
          <rect x="2.500" y="2.500" width="13" height="13" fill="none" stroke={ink} strokeDasharray="2.500 1.500" strokeWidth="1.700" />
          <rect x="8" y="8" width="2" height="2" fill={ink} />
        </DockIcon>
        <DockIcon>
          <rect x="1" y="0" width="1" height="18" fill={ink} />
          <rect x="4" y="2" width="8" height="6" fill={ink} />
          <rect x="4" y="10" width="13" height="6" fill={ink} />
        </DockIcon>
        <DockIcon>
          <rect x="1" y="1" width="10" height="10" fill={ink} />
          <rect x="7" y="7" width="10" height="10" fill="#b0b0b0" stroke="#535353" />
          <rect x="7" y="7" width="4" height="4" fill="#535353" stroke={ink} />
        </DockIcon>
      </DockGroup>
      <DockGroup h="h-[97px]">
        <DockIcon>
          <rect x="1" y="1" width="10" height="12" fill="none" stroke={ink} />
          <rect x="5.500" y="6.500" width="12" height="10" fill="#535353" stroke={ink} />
        </DockIcon>
        <DockIcon>
          <path d="M9 1l8 5-8 5-8-5z" fill={ink} />
          <path d="M1 10l3-1 5 3 5-3 3 1-8 5z" fill={ink} />
        </DockIcon>
        <DockIcon>
          <rect x="0.500" y="5" width="10" height="8" rx="4" fill="none" stroke={ink} strokeWidth="1.700" />
          <rect x="7.500" y="5" width="10" height="8" rx="4" fill="none" stroke={ink} strokeWidth="1.700" />
        </DockIcon>
      </DockGroup>
      <DockGroup h="h-[69px]">
        <DockIcon active>
          <path d="M1 15L6 2h1l5 13M3 10h7" fill="none" stroke="#cfcfcf" strokeWidth="1.700" />
          <line x1="16" y1="1" x2="16" y2="17" stroke="#cfcfcf" />
        </DockIcon>
        <DockIcon>
          <path d="M8 2h7v1h-1v14h-2V3h-1v14H9V9a4 4 0 01-1-7z" fill={ink} />
        </DockIcon>
      </DockGroup>
      <DockGroup h="h-[43px]">
        <DockIcon>
          <path d="M3 3l13 6-13 6z" fill={ink} />
        </DockIcon>
      </DockGroup>
    </div>
  );
}

function ToolbarIconButtons() {
  return (
    <div className="ml-auto flex items-center pr-[12px]">
      <svg viewBox="0 0 14 14" className="h-[13px] w-[13px]">
        <g fill="#6e6e6e">
          <rect x="0" y="0" width="6" height="6" /><rect x="8" y="0" width="6" height="6" />
          <rect x="0" y="8" width="6" height="6" /><rect x="8" y="8" width="6" height="6" />
        </g>
      </svg>
      <svg viewBox="0 0 16 14" className="ml-[12px] h-[14px] w-[15px]">
        <rect x="0" y="0" width="3" height="3" fill="#c8c8c8" /><rect x="0" y="5" width="3" height="3" fill="#c8c8c8" /><rect x="0" y="10" width="3" height="3" fill="#c8c8c8" />
        <path d="M5 2h4a4 4 0 010 8H5" fill="none" stroke="#c8c8c8" strokeWidth="1.600" />
      </svg>
      <Chev className="ml-[5px] h-[5px] w-[9px] text-[#777]" />
      <svg viewBox="0 0 12 10" className="ml-[21px] h-[11px] w-[15px]">
        <path d="M0 1h2v1.500H0zM3 1h9v1.500H3zM0 4.500h2V6H0zM3 4.500h9V6H3zM0 8h2v1.500H0zM3 8h9v1.500H3z" fill="#cfcfcf" />
      </svg>
    </div>
  );
}

function CtrlSep({ className = "" }) {
  return <div className={`h-[26px] w-[2px] shrink-0 bg-[#484848] ${className}`} />;
}

export default function App() {
  return (
    <div className="relative flex h-[1035px] w-[1919px] flex-col overflow-hidden bg-[#535353] font-['Roboto',sans-serif] text-[10.5px] leading-none text-[#e0e0e0]">
      {/* Menu */}
      <div className="flex h-[31px] shrink-0 items-center border-b border-[#3a3a3a] pl-[10px]">
        <div className="flex h-[15px] w-[16px] items-center justify-center rounded-[2px] bg-[#330000] text-[9.5px] font-bold text-[#ff9a00]">Ai</div>
        <svg viewBox="0 0 16 14" className="ml-[14px] h-[15px] w-[18px]">
          <path d="M8 0l8 7h-2v7H10V9H6v5H2V7H0z" fill="#c8c8c8" />
        </svg>
        <div className="ml-[15px] h-[20px] w-[2px] bg-[#4a4a4a]" />
        <div className="mb-[2px] ml-[14px] flex gap-[14.2px] text-[12px] text-[#d2d2d2]">
          <span>File</span><span>Edit</span><span>Object</span><span>Type</span><span>Select</span><span>Effect</span><span>View</span><span>Window</span><span>Help</span>
        </div>
        <div className="ml-[11px] h-[20px] w-[2px] bg-[#4a4a4a]" />
        <div className="ml-auto flex h-full items-center">
          <div className="mr-[13px] h-[25px] w-[2px] bg-[#4a4a4a]" />
          <div className="relative h-[15px] w-[14px]">
            <svg viewBox="0 0 14 15" className="h-[15px] w-[14px]">
              <path d="M7 1a4 4 0 014 4c0 4 2 5 2 6H1c0-1 2-2 2-6a4 4 0 014-4zM5 12h4a2 2 0 01-4 0z" fill="#c8c8c8" />
            </svg>
            <div className="absolute -top-[1px] right-[-3px] h-[7px] w-[7px] rounded-full bg-[#2680eb]" />
          </div>
          <svg viewBox="0 0 16 16" className="ml-[16px] h-[16px] w-[16px]">
            <circle cx="6.500" cy="6.500" r="5" fill="none" stroke="#c8c8c8" strokeWidth="1.600" />
            <line x1="10" y1="10" x2="15" y2="15" stroke="#c8c8c8" strokeWidth="2" />
          </svg>
          <div className="ml-[14px] h-[20px] w-[2px] bg-[#4a4a4a]" />
          <svg viewBox="0 0 17 12" className="ml-[19px] h-[12px] w-[17px]">
            <path d="M0 0h7v12H0zM9 0h8v5H9zM9 7h8v5H9z" fill="#c8c8c8" />
          </svg>
          <svg viewBox="0 0 16 12" className="ml-[18px] h-[12px] w-[16px]">
            <rect x="0.500" y="0.500" width="15" height="11" fill="none" stroke="#c8c8c8" />
            <path d="M3 3h1v1H3zM3 6h1v1H3zM6 1v10" stroke="#c8c8c8" fill="none" />
          </svg>
          <div className="mb-[12px] ml-[13px] mr-[3px] flex h-[19px] w-[83px] items-center rounded-b-[3px] border-x border-b border-[#666] text-[#bbb]">
            <div className="flex h-full w-[28px] items-center justify-center"><div className="h-[2px] w-[10px] bg-[#bbb]" /></div>
            <div className="flex h-full w-[27px] items-center justify-center border-x border-[#666]">
              <svg viewBox="0 0 12 12" className="h-[11px] w-[11px]"><path d="M3.500 3.500v-3h8v6h-3M.5 3.500h8v8h-8z" fill="none" stroke="currentColor" strokeWidth="1.300" /></svg>
            </div>
            <div className="flex h-full flex-1 items-center justify-center text-[13px] font-bold">✕</div>
          </div>
        </div>
      </div>
      {/* Control */}
      <div className="flex h-[33px] shrink-0 items-center border-b border-[#3a3a3a] pt-[2px]">
        <div className="ml-[5px] h-[17px] w-[3px] bg-[repeating-linear-gradient(to_bottom,#6e6e6e_0,#6e6e6e_1px,transparent_1px,transparent_2px)]" />
        <span className="ml-[7px] w-[91px] shrink-0 text-[#a6a6a6]">No Selection</span>
        <CtrlSep />
        <div className="ml-[5px] flex h-[20px] w-[37px] items-center rounded-[2px] border border-[#616161]">
          <NoneSwatch className="h-full w-[20px]" />
          <div className="flex flex-1 justify-center text-[#e0e0e0]"><Chev className="h-[5px] w-[9px]" /></div>
        </div>
        <div className="ml-[7px] flex h-[20px] w-[38px] items-center rounded-[2px] border border-[#616161]">
          <div className="flex h-full w-[19px] items-center justify-center border border-white bg-black">
            <div className="h-[7px] w-[7px] border-2 border-white" />
          </div>
          <div className="flex flex-1 justify-center text-[#e0e0e0]"><Chev className="h-[5px] w-[9px]" /></div>
        </div>
        <span className="ml-[12px] w-[31px] shrink-0 whitespace-nowrap border-b border-dotted border-[#cfcfcf] font-medium text-[#d0d0d0]">Stroke:</span>
        <div className="ml-[6px] flex h-[20px] w-[81px] shrink-0 items-center rounded-[2px] border border-[#616161]">
          <Stepper w="w-[18px]" />
          <span className="flex h-full flex-1 items-center bg-[#454545] pl-[3px] text-[#e8e8e8]">3 pt</span>
          <ChevBox />
        </div>
        <div className="ml-[6px] flex h-[20px] w-[109px] shrink-0 items-center rounded-[2px] border border-[#616161]">
          <div className="flex h-full w-[90px] items-center justify-center gap-[4px] bg-[#e2e2e2] text-[#111]">
            <StrokeLine w="w-[40px]" />
            <span className="pt-[2px]">Uniform</span>
          </div>
          <div className="flex flex-1 justify-center text-[#e0e0e0]"><Chev className="h-[5px] w-[9px]" /></div>
        </div>
        <div className="ml-[6px] flex h-[20px] w-[104px] shrink-0 items-center rounded-[2px] border border-[#616161]">
          <div className="flex h-full w-[86px] items-center justify-center gap-[11px] bg-[#e2e2e2] text-[#111]">
            <div className="h-[4px] w-[4px] rounded-full bg-black" />
            <span className="pt-px">5 pt. Round</span>
          </div>
          <div className="flex flex-1 justify-center text-[#e0e0e0]"><Chev className="h-[5px] w-[9px]" /></div>
        </div>
        <span className="ml-[8px] w-[37px] shrink-0 whitespace-nowrap border-b border-dotted border-[#cfcfcf] font-medium text-[#d0d0d0]">Opacity:</span>
        <div className="ml-[5px] flex h-[20px] w-[69px] shrink-0 items-center rounded-[2px] border border-[#616161]">
          <span className="flex h-full flex-1 items-center bg-[#454545] pl-[3px] text-[#e8e8e8]">100%</span>
          <div className="flex h-full w-[18px] items-center justify-center border-l border-[#616161] text-[#e0e0e0]"><Chev dir="right" /></div>
        </div>
        <span className="ml-[6px] w-[25px] shrink-0 text-[#a6a6a6]">Style:</span>
        <div className="ml-[5px] flex h-[20px] w-[38px] shrink-0 items-center rounded-[2px] border border-[#616161]">
          <div className="h-full w-[20px] bg-[#e6e6e6]" />
          <div className="flex flex-1 justify-center text-[#e0e0e0]"><Chev className="h-[5px] w-[9px]" /></div>
        </div>
        <CtrlSep className="ml-[7px]" />
        <div className="ml-[4px] flex h-[19px] w-[93px] shrink-0 items-center justify-center rounded-[2px] border border-[#777] whitespace-nowrap pt-px text-[#f2f2f2]">Document Setup</div>
        <div className="ml-[5px] flex h-[19px] w-[71px] shrink-0 items-center justify-center rounded-[2px] border border-[#777] pt-px text-[#f2f2f2]">Preferences</div>
        <svg viewBox="0 0 16 16" className="ml-[10px] h-[17px] w-[16px] shrink-0">
          <path d="M5 3h8v5M1 6h6v5H1zM11 1h3v3h-3z" fill="none" stroke="#bbb" />
          <path d="M7 7v9l2-2 4-1z" fill="#c8c8c8" />
        </svg>
        <Chev className="ml-[5px] h-[5px] w-[9px] shrink-0 text-[#c8c8c8]" />
        <CtrlSep className="ml-[8px]" />
        <div className="relative ml-[14px] h-[17px] w-[16px] shrink-0">
          <svg viewBox="0 0 15 17" className="h-[17px] w-[16px]">
            <path d="M1 7v8a1 1 0 001 1h11a1 1 0 001-1V9" fill="none" stroke="#c8c8c8" strokeWidth="1.500" />
            <path d="M10 0l1 3 3 1-3 1-1 3-1-3-3-1 3-1zM7 9l1 2 2 1-2 1-1 2-1-2-2-1 2-1z" fill="#b0b0b0" />
          </svg>
          <div className="absolute -top-[1px] left-0 h-[7px] w-[6px] rounded-full bg-[#2680eb]" />
        </div>
        <ToolbarIconButtons />
      </div>
      {/* Main */}
      <div className="flex min-h-0 flex-1">
        <div className="flex w-[1639px] shrink-0 flex-col">
          <div className="flex h-[30px] shrink-0 items-stretch border-b border-[#383838] bg-[#424242]">
            <div className="flex w-[271px] items-center border-r border-[#383838] bg-[#535353] pl-[10px] pr-[5px] text-[11.7px] text-[#efefef]">
              <span className="flex-1 whitespace-nowrap pt-px">Flower Design* @ 100.24 % (CMYK/Preview)</span>
              <span className="text-[9px] font-bold">✕</span>
            </div>
          </div>
          <div className="flex min-h-0 flex-1">
            <div className="flex min-w-0 flex-1 flex-col">
              <div className="min-h-0 flex-1 bg-[#5c5c5c] pl-[213px] pt-[25px]">
                <div className="h-[848px] w-[1197px] border-2 border-black bg-white">
                  <svg viewBox="0 0 1193 844" className="h-full w-full">
                    <path d="M611 128C573 170 550 213 550 265C550 318 573 361 611 403C649 361 673 318 673 265C673 213 649 170 611 128Z" fill="none" stroke="#000" strokeWidth="5" />
                  </svg>
                </div>
              </div>
              <div className="flex h-[24px] shrink-0 items-center border-t-2 border-[#484848] bg-[#535353] pl-[6px] text-[#b5b5b5]">
                <div className="flex h-[14px] w-[14px] items-center justify-center rounded-full bg-[#b5b5b5] text-[10px] font-bold text-[#535353]">?</div>
                <span className="ml-[11px] w-[119px] whitespace-nowrap"><b className="font-medium">Click</b> the object to select</span>
                <span className="w-[9px]">|</span>
                <span className="w-[172px] whitespace-nowrap"><b className="font-medium">Shift+Click</b> to select multiple object</span>
                <span className="w-[9px]">|</span>
                <span className="whitespace-nowrap"><b className="font-medium">Alt+Drag</b> the object to duplicate</span>
              </div>
              <div className="flex h-[18px] shrink-0 items-start bg-[#535353]">
                <div className="ml-[5px] flex h-[17px] w-[68px] items-center rounded-t-[2px] border-x border-t border-[#616161] pt-[3px]">
                  <span className="flex-1 pl-[3px] text-[#efefef]">100.24%</span>
                  <Chev className="mr-[4px] h-[5px] w-[8px]" />
                </div>
                <div className="ml-[5px] flex h-[17px] w-[68px] items-center rounded-t-[2px] border-x border-t border-[#616161] pt-[3px]">
                  <span className="flex-1 pl-[3px] text-[#efefef]">0°</span>
                  <Chev className="mr-[4px] h-[5px] w-[8px]" />
                </div>
                <div className="ml-[9px] flex h-[17px] w-[33px] items-center gap-[6px] pt-[3px] text-[#757575]">
                  <span className="text-[10px]">|◀</span><span className="text-[10px]">◀</span>
                </div>
                <div className="flex h-[17px] w-[59px] items-center rounded-t-[2px] border-x border-t border-[#616161] pt-[3px]">
                  <span className="flex-1 pl-[4px] text-[#efefef]">1</span>
                  <Chev className="mr-[4px] h-[5px] w-[8px]" />
                </div>
                <div className="ml-[8px] flex h-[17px] w-[33px] items-center gap-[6px] pt-[3px] text-[#757575]">
                  <span className="text-[10px]">▶</span><span className="text-[10px]">▶|</span>
                </div>
                <div className="flex h-[17px] w-[200px] items-center justify-center border-l border-[#4a4a4a] pt-[3px] text-[#b5b5b5]">Selection</div>
                <div className="ml-[7px] flex h-[17px] w-[11px] items-center pt-[3px] text-[10px] text-[#c8c8c8]">▶</div>
                <div className="flex h-[17px] flex-1 items-center bg-[#4e4e4e] pl-[5px] pr-[4px] text-[#a0a0a0]">
                  <Chev dir="left" />
                  <div className="ml-[529px] h-[12px] w-[27px] rounded-full bg-[#6e6e6e]" />
                  <div className="flex-1" />
                  <Chev dir="right" />
                </div>
              </div>
            </div>
            <div className="flex w-[17px] shrink-0 flex-col items-center justify-between bg-[#535353] pb-[23px] pt-[6px] text-[#8a8a8a]">
              <Chev dir="up" />
              <Chev />
            </div>
          </div>
        </div>
        <Dock />
        <div className="flex min-w-0 flex-1 flex-col border-l border-[#383838]">
          <div className="flex h-[13px] shrink-0 items-center justify-end bg-[#424242] pr-[5px] text-[10px] leading-none text-[#cfcfcf]">››</div>
          <ColorPanel />
          <StrokePanel />
          <AttributesPanel />
          <TransparencyPanel />
        </div>
      </div>
      <div className="h-[3px] shrink-0 bg-[#262626]" />
      <ToolPanel />
      <CharacterPanel />
      <BrushesPanel />
    </div>
  );
}
